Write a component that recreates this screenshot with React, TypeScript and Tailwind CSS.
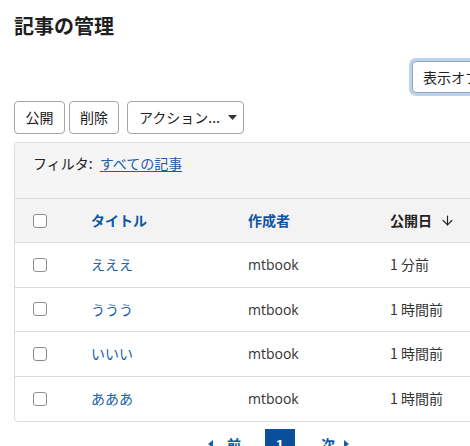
import { ArrowDown } from 'lucide-react';

const rows = [
  { title: 'えええ', author: 'mtbook', date: '1 分前' },
  { title: 'ううう', author: 'mtbook', date: '1 時間前' },
  { title: 'いいい', author: 'mtbook', date: '1 時間前' },
  { title: 'あああ', author: 'mtbook', date: '1 時間前' },
];

const font = 'font-["Noto_Sans_CJK_JP","Noto_Sans",sans-serif]';

const Checkbox = () => (
  <span className="block h-[14px] w-[14px] rounded-[3px] border border-[#8d8d8d] bg-white" />
);

const App = () => {
  return (
    <div className={`h-[446px] w-[470px] overflow-hidden bg-white text-[#222] ${font}`}>
      <div className="w-[540px] pl-[14px]">
        {/* Title */}
        <h1 className="pt-[12px] text-[20px] font-bold leading-[28px] text-[#1f1f1f]">記事の管理</h1>

        {/* Display options */}
        <div className="mt-[21px] flex justify-end pr-[6px]">
          <button className="h-[32px] w-[122px] rounded-[4px] border border-[#8fa6bf] bg-white pl-[10px] text-left text-[14px] ring-[3px] ring-[#bed3ea]">
            表示オプション
          </button>
        </div>

        {/* Action buttons */}
        <div className="mt-[8px] flex gap-[4px]">
          <button className="h-[33px] w-[51px] rounded-[4px] border border-[#a5a5a5] bg-white text-[14px]">公開</button>
          <button className="h-[33px] w-[50px] rounded-[4px] border border-[#a5a5a5] bg-white text-[14px]">削除</button>
          <button className="ml-[4px] flex h-[33px] w-[117px] items-center gap-[8px] rounded-[4px] border border-[#a5a5a5] bg-white pl-[11px] text-[14px]">
            アクション...
            <svg width="9" height="5" viewBox="0 0 9 5">
              <path d="M0 0h9L4.5 5z" fill="#333" />
            </svg>
          </button>
        </div>

        {/* Panel */}
        <div className="mt-[8px] rounded-[4px] border border-[#dcdcdc]">
          <div className="h-[55px] rounded-t-[4px] bg-[#f5f5f5] pl-[18px] pt-[10px] text-[14px] leading-[20px]">
            フィルタ:{' '}
            <a className="ml-[4px] text-[#1a5fa8] underline underline-offset-2">すべての記事</a>
          </div>

          {/* Header */}
          <div className="grid h-[45px] grid-cols-[76px_157px_142px_1fr] items-center border-y border-[#dcdcdc] bg-[#f3f3f3] text-[14px] font-bold">
            <div className="pl-[18px]">
              <Checkbox />
            </div>
            <div className="text-[#0f559f]">タイトル</div>
            <div className="text-[#0f559f]">作成者</div>
            <div className="flex items-center gap-[8px] text-[#222]">
              公開日
              <ArrowDown size={15} strokeWidth={1.8} />
            </div>
          </div>

          {/* Rows */}
          {rows.map((row, i) => (
            <div
              key={row.title}
              className={`grid h-[44.5px] grid-cols-[76px_157px_142px_1fr] items-center text-[14px] ${
                i < rows.length - 1 ? 'border-b border-[#dcdcdc]' : ''
              }`}
            >
              <div className="pl-[18px]">
                <Checkbox />
              </div>
              <div className="text-[#1a5fa8]">{row.title}</div>
              <div className='font-["Open_Sans",sans-serif] text-[#333]'>{row.author}</div>
              <div className="text-[#333]">{row.date}</div>
            </div>
          ))}
        </div>

        {/* Pagination */}
        <div className="mt-[7px] flex items-center pl-[194px] text-[14px] font-bold text-[#0f559f]">
          <span className="flex items-center gap-[14px]">
            <svg width="5" height="8" viewBox="0 0 5 8">
              <path d="M5 0v8L0 4z" fill="#1a5fa8" />
            </svg>
            前
          </span>
          <span className="ml-[24px] flex h-[30px] w-[30px] items-center justify-center bg-[#0b4f9c] text-white">1</span>
          <span className="ml-[26px] flex items-center gap-[9px]">
            次
            <svg width="5" height="8" viewBox="0 0 5 8">
              <path d="M0 0v8l5-4z" fill="#1a5fa8" />
            </svg>
          </span>
        </div>
      </div>
    </div>
  );
};

export default App;
